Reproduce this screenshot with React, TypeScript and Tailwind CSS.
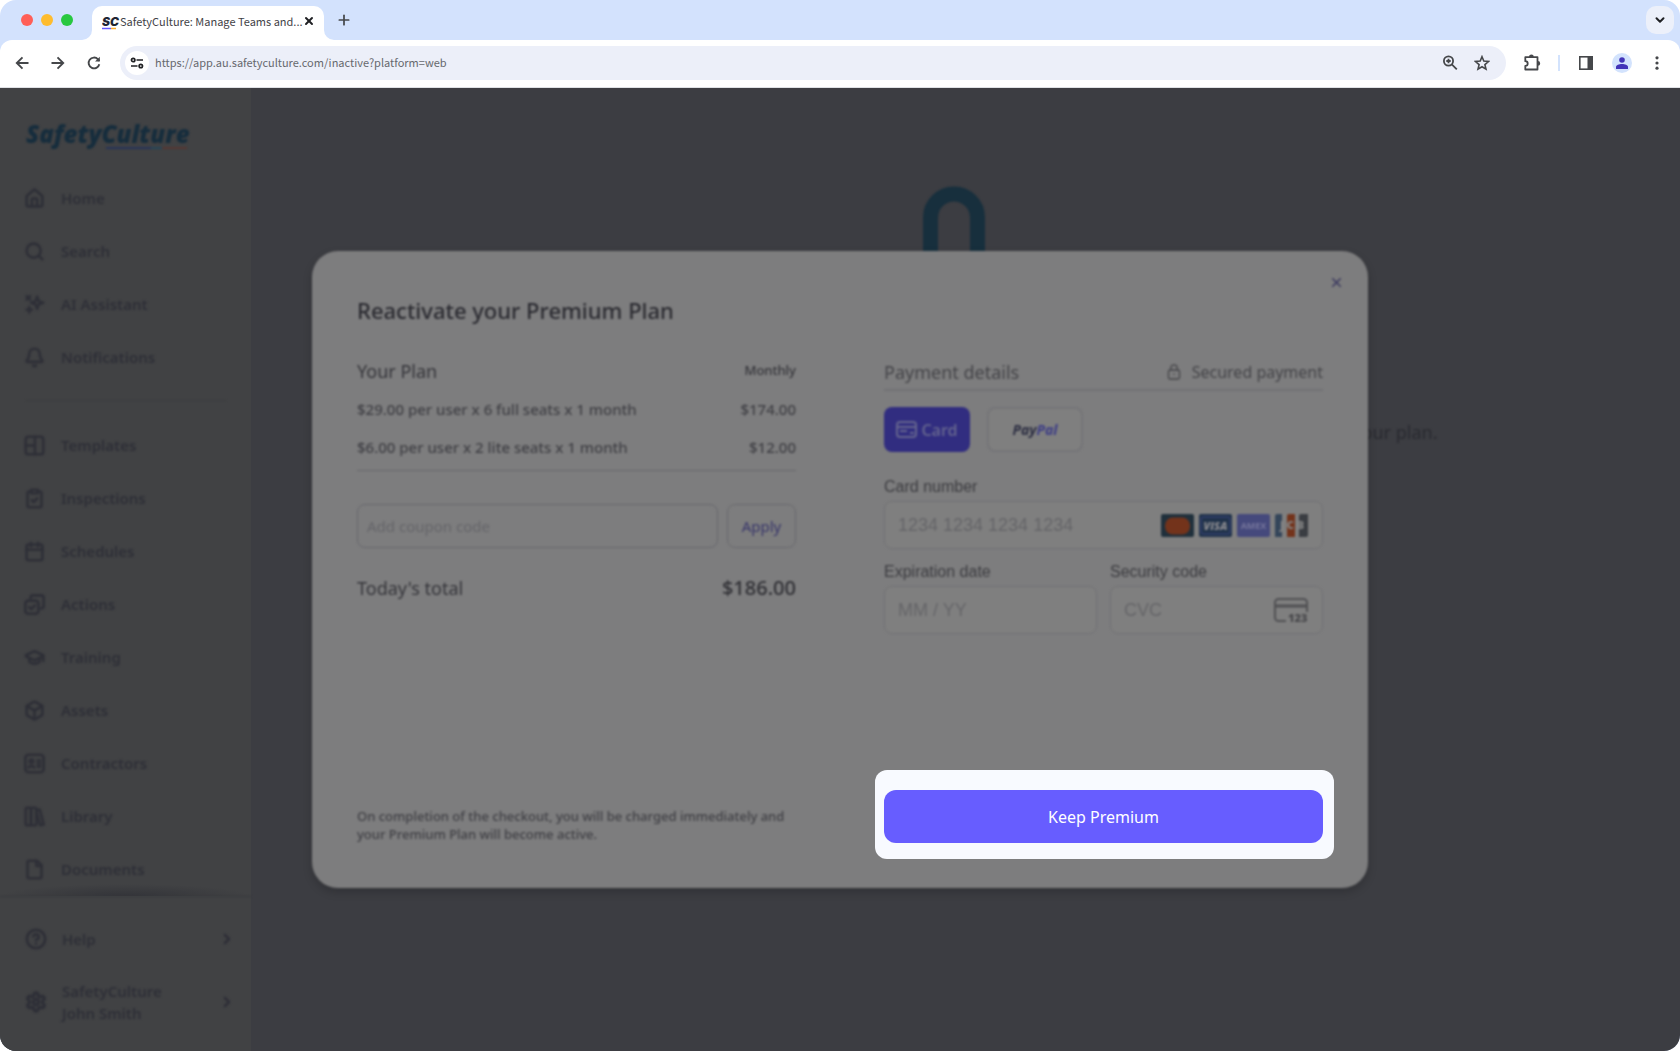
import React from 'react';
import {
  Bell,
  Box,
  Calendar,
  ChevronDown,
  ChevronRight,
  CircleHelp,
  ClipboardCheck,
  File,
  GraduationCap,
  House,
  Plus,
  Search,
  Settings,
  X,
} from 'lucide-react';

const svgProps = {
  viewBox: '0 0 24 24',
  fill: 'none',
  stroke: 'currentColor',
  strokeWidth: 3,
  strokeLinecap: 'round' as const,
  strokeLinejoin: 'round' as const,
};

function AssistantIcon({ className }: { className?: string }) {
  return (
    <svg {...svgProps} className={className}>
      <path d="M15 3l1.800 5.200L22 10l-5.200 1.800L15 17l-1.800-5.200L8 10l5.200-1.800z" />
      <path d="M3 2.500l4 4M3 6.500l4-4" />
      <path d="M6 15v6M3 18h6" />
    </svg>
  );
}

function TemplatesIcon({ className }: { className?: string }) {
  return (
    <svg {...svgProps} className={className}>
      <rect x="2" y="2" width="20" height="20" rx="3" />
      <path d="M12.500 2v20M2 12h10.500" />
    </svg>
  );
}

function ActionsIcon({ className }: { className?: string }) {
  return (
    <svg {...svgProps} className={className}>
      <rect x="1.500" y="7.500" width="15" height="15" rx="3.500" />
      <path d="M7.500 4.500a3 3 0 0 1 3-3h9a3 3 0 0 1 3 3v9a3 3 0 0 1-3 3" />
      <path d="M6 15l2.300 2.300L12.500 13" />
    </svg>
  );
}

function ContractorsIcon({ className }: { className?: string }) {
  return (
    <svg {...svgProps} className={className}>
      <rect x="1.500" y="2" width="21" height="20" rx="4" />
      <circle cx="8.500" cy="9.500" r="2" />
      <path d="M5.500 16.500c.4-2 5.600-2 6 0M15.500 8.500h3M15.500 12h3M15.500 15.500h3" />
    </svg>
  );
}

function LibraryIcon({ className }: { className?: string }) {
  return (
    <svg {...svgProps} className={className}>
      <rect x="2" y="2" width="6" height="20" rx="1.500" />
      <rect x="8" y="2" width="6" height="20" rx="1.500" />
      <path d="M14 5l4-1 4.500 17-4 1L14 6" />
    </svg>
  );
}

const topItems = [
  { label: 'Home', icon: House },
  { label: 'Search', icon: Search },
  { label: 'AI Assistant', icon: AssistantIcon },
  { label: 'Notifications', icon: Bell },
];

const mainItems = [
  { label: 'Templates', icon: TemplatesIcon },
  { label: 'Inspections', icon: ClipboardCheck },
  { label: 'Schedules', icon: Calendar },
  { label: 'Actions', icon: ActionsIcon },
  { label: 'Training', icon: GraduationCap },
  { label: 'Assets', icon: Box },
  { label: 'Contractors', icon: ContractorsIcon },
  { label: 'Library', icon: LibraryIcon },
  { label: 'Documents', icon: File },
];

const planRows = [
  { label: '$29.00 per user x 6 full seats x 1 month', price: '$174.00' },
  { label: '$6.00 per user x 2 lite seats x 1 month', price: '$12.00' },
];

function NavItem({ item }: { item: any }) {
  const Icon = item.icon;
  return (
    <li>
      <a href="#" className="flex h-[53px] items-center gap-4">
        <Icon className="size-[21px]" strokeWidth={3} />
        {item.label}
      </a>
    </li>
  );
}

function TabStrip() {
  return (
    <div className="flex h-10 items-end pr-1.5 pl-[21px]">
      <div className="flex gap-2 self-center">
        <span className="size-3 rounded-full bg-[#ff5f57]"></span>
        <span className="size-3 rounded-full bg-[#febc2e]"></span>
        <span className="size-3 rounded-full bg-[#28c840]"></span>
      </div>
      <svg className="ml-[9px] size-2.5" viewBox="0 0 10 10"><path d="M10 0v10H0A10 10 0 0 0 10 0z" fill="#fff" /></svg>
      <div className="flex h-[34px] w-[232px] items-center rounded-t-[10px] bg-white pr-2.5 pb-1 pl-2.5 font-['Noto_Sans_CJK_SC','Open_Sans',sans-serif]">
        <svg className="h-5 w-[18px] shrink-0" viewBox="0 0 18 20">
          <text x="0" y="15" fontFamily="Inter, sans-serif" fontSize="12" fontWeight="900" fontStyle="italic" fill="#1f2533">SC</text>
          <path d="M0 17.500h9" stroke="#6559ff" strokeWidth="1.400" />
          <path d="M9 17.500h5" stroke="#ffb02e" strokeWidth="1.400" />
        </svg>
        <span className="flex-1 text-[11px] leading-5 whitespace-nowrap text-[#3f4247]">SafetyCulture: Manage Teams and...</span>
        <button type="button" aria-label="Close tab"><X className="size-3 text-[#202124]" strokeWidth={4} /></button>
      </div>
      <svg className="size-2.5" viewBox="0 0 10 10"><path d="M0 0v10h10A10 10 0 0 1 0 0z" fill="#fff" /></svg>
      <button type="button" aria-label="New tab" className="ml-0.5 self-center"><Plus className="size-4 text-[#45474a]" strokeWidth={2.6} /></button>
      <button type="button" aria-label="Search tabs" className="ml-auto flex size-7 items-center justify-center self-center rounded-[10px] bg-[#ecf0fa]">
        <ChevronDown className="size-3.5 text-[#202124]" strokeWidth={3.4} />
      </button>
    </div>
  );
}

function Toolbar() {
  return (
    <div className="flex h-12 items-center rounded-t-xl border-b border-[#dfe1e5] bg-white pr-3.5 pb-0.5 pl-3 text-[#45474a]">
      <div className="flex gap-4">
        <button type="button" aria-label="Back">
          <svg className="size-5" viewBox="0 0 20 20" fill="none" stroke="currentColor" strokeWidth="1.900"><path d="M16.500 10H5M10.500 4.300L4.800 10l5.700 5.700" /></svg>
        </button>
        <button type="button" aria-label="Forward">
          <svg className="size-5" viewBox="0 0 20 20" fill="none" stroke="currentColor" strokeWidth="1.900"><path d="M3.500 10H15M9.500 4.300l5.700 5.700-5.700 5.700" /></svg>
        </button>
        <button type="button" aria-label="Reload">
          <svg className="size-5" viewBox="0 0 20 20" fill="none" stroke="currentColor" strokeWidth="1.900"><path d="M15.300 11.200A5.400 5.400 0 1 1 14 6.300l1.500 1.500" /><path d="M15.800 3.800v4.700h-4.700z" fill="currentColor" stroke="none" /></svg>
        </button>
      </div>
      <div className="ml-4 flex h-[34px] flex-1 items-center rounded-full bg-[#eceff9] pr-4 pl-[5px]">
        <button type="button" aria-label="Site information" className="flex size-6 items-center justify-center rounded-full bg-white">
          <svg className="size-4" viewBox="0 0 16 16" fill="none" stroke="#202124" strokeWidth="1.700">
            <circle cx="4.200" cy="5" r="1.700" />
            <path d="M7.500 5H14M2 11h6.500" />
            <circle cx="11.800" cy="11" r="1.700" />
          </svg>
        </button>
        <input
          type="text"
          aria-label="Address"
          defaultValue="https://app.au.safetyculture.com/inactive?platform=web"
          className="ml-1.5 min-w-0 flex-1 bg-transparent font-['Noto_Sans_CJK_SC','Open_Sans',sans-serif] text-[11px] text-[#66686d] outline-none"
        />
        <button type="button" aria-label="Zoom">
          <svg className="size-4" viewBox="0 0 16 16" fill="none" stroke="currentColor" strokeWidth="1.800"><circle cx="6.500" cy="6" r="4.600" /><path d="M9.800 9.300l5 5M4.300 6h4.400M6.500 3.800v4.400" /></svg>
        </button>
        <button type="button" aria-label="Bookmark" className="ml-4">
          <svg className="size-4" viewBox="0 0 16 16" fill="none" stroke="currentColor" strokeWidth="1.600"><path d="M8 1.700l1.800 4.400 4.700.4-3.600 3.100 1.100 4.600L8 11.800l-4 2.400 1.100-4.600L1.500 6.500l4.700-.4z" /></svg>
        </button>
      </div>
      <button type="button" aria-label="Extensions" className="ml-[17px]">
        <svg className="size-[18px]" viewBox="0 0 18 18" fill="none" stroke="currentColor" strokeWidth="1.800"><path d="M2.300 3.200H14.500V15.500H2.300V12a2.300 2.300 0 0 0 0-4.800z" strokeLinejoin="round" /><path d="M6 3a2.400 2.400 0 0 1 4.800 0zM14.800 7a2.400 2.400 0 0 1 0 4.800z" fill="currentColor" stroke="none" /></svg>
      </button>
      <span className="ml-[17px] h-4 w-0.5 bg-[#d3e3fd]"></span>
      <button type="button" aria-label="Side panel" className="ml-[18px]">
        <svg className="size-4" viewBox="0 0 16 16" fill="none" stroke="currentColor" strokeWidth="1.600"><rect x="1.800" y="1.800" width="12.400" height="12.400" /><path d="M9.500 2h4.500v12H9.500z" fill="currentColor" stroke="none" /></svg>
      </button>
      <button type="button" aria-label="Profile" className="ml-[18px] flex size-5 items-center justify-center rounded-full bg-[#d3e3fd]">
        <svg className="size-3.5" viewBox="0 0 14 14" fill="#4234b8"><circle cx="7" cy="4" r="2.800" /><path d="M1 13V11c0-4 12-4 12 0v2z" /></svg>
      </button>
      <button type="button" aria-label="Menu" className="ml-4">
        <svg className="size-[18px]" viewBox="0 0 18 18" fill="currentColor"><circle cx="9" cy="3.800" r="1.600" /><circle cx="9" cy="9" r="1.600" /><circle cx="9" cy="14.200" r="1.600" /></svg>
      </button>
    </div>
  );
}

function Sidebar() {
  return (
    <aside className="flex w-[251px] shrink-0 flex-col bg-[#414244] text-[15px] font-semibold text-[#2e2f37]">
      <nav className="flex-1 pt-7 blur-[1px]">
        <svg className="ml-[26px] h-9 w-[190px]" viewBox="0 0 190 36">
          <text x="0" y="27" fontFamily="Open Sans, sans-serif" fontSize="24" fontWeight="800" fontStyle="italic" fill="#162d3d">SafetyCulture</text>
          <path d="M80 32h45" stroke="#26345a" strokeWidth="2" />
          <path d="M125 32h11" stroke="#24465a" strokeWidth="2" />
          <path d="M136 32h25" stroke="#553732" strokeWidth="2" />
        </svg>
        <ul className="mt-5 pl-6">
          {topItems.map((item) => <NavItem key={item.label} item={item} />)}
        </ul>
        <hr className="mt-4 mr-[25px] ml-[26px] border-[#3b3c3f]" />
        <ul className="mt-[18px] pl-6">
          {mainItems.map((item) => <NavItem key={item.label} item={item} />)}
        </ul>
      </nav>
      <div className="-mt-3 h-3 bg-[radial-gradient(50%_100%_at_50%_100%,#333439,transparent)]"></div>
      <div className="border-t border-[#37383d] pt-[22px] pb-[26px] blur-[1px]">
        <a href="#" className="flex h-10 items-center gap-[15px] pl-[25px]">
          <CircleHelp className="size-[22px]" strokeWidth={3} />
          Help
          <ChevronRight className="mr-4 ml-auto size-4" strokeWidth={4} />
        </a>
        <a href="#" className="mt-5 flex h-[46px] items-center gap-[15px] pl-[25px]">
          <Settings className="size-[22px]" strokeWidth={3.6} />
          <span className="leading-[22px]">SafetyCulture<br />John Smith</span>
          <ChevronRight className="mr-4 ml-auto size-4" strokeWidth={4} />
        </a>
      </div>
    </aside>
  );
}

function CardBrands() {
  return (
    <svg className="h-[23px] w-[148px] shrink-0" viewBox="0 0 148 23">
      <rect width="33" height="23" rx="2" fill="#20303c" />
      <rect x="4" y="3.500" width="25" height="17" rx="8" fill="#73331b" />
      <rect x="38" width="33" height="23" rx="2" fill="#20324a" />
      <rect x="40" y="3" width="29" height="17" rx="2" fill="none" stroke="#3c4680" />
      <text x="54.500" y="16" fontFamily="Open Sans, sans-serif" fontSize="11" fontWeight="800" fontStyle="italic" textAnchor="middle" fill="#8b8b90">VISA</text>
      <rect x="76" width="33" height="23" rx="2" fill="#45497c" />
      <text x="92.500" y="15" fontFamily="Open Sans, sans-serif" fontSize="9" fontWeight="700" textAnchor="middle" fill="#76769c">AMEX</text>
      <path d="M116 0h5v23h-7V2a2 2 0 0 1 2-2z" fill="#34455a" />
      <path d="M128 0h6v23h-8V2a2 2 0 0 1 2-2z" fill="#73331b" />
      <path d="M140 0h7v21a2 2 0 0 1-2 2h-7V2a2 2 0 0 1 2-2z" fill="#3a3d42" />
      <text x="131" y="15" fontFamily="Open Sans, sans-serif" fontSize="11" fontWeight="800" textAnchor="middle" fill="#858585">J C B</text>
    </svg>
  );
}

function CvcIcon() {
  return (
    <svg className="h-[31px] w-[38px] shrink-0" viewBox="0 0 38 31" fill="none" stroke="#505053" strokeWidth="2">
      <path d="M12 26H4.500A3.500 3.500 0 0 1 1 22.500V7.500A3.500 3.500 0 0 1 4.500 4h25A3.500 3.500 0 0 1 33 7.500V17" />
      <path d="M1 11h32" strokeWidth="3" />
      <text x="14" y="27" fontFamily="Open Sans, sans-serif" fontSize="11" fontWeight="800" fill="#48484b" stroke="none">123</text>
    </svg>
  );
}

function CheckoutModal() {
  const fieldBox = 'flex h-12 items-center rounded-lg border border-[#727275] bg-[#7f7f7f] pl-[13px]';
  const fieldInput = 'min-w-0 flex-1 bg-transparent text-lg text-[#636366] outline-none placeholder:text-[#656568]';

  return (
    <div className="absolute inset-0 flex items-center justify-center">
      <section role="dialog" aria-label="Reactivate your Premium Plan" className="relative flex min-h-[637px] w-full max-w-[1056px] flex-col px-[45px] pt-11 pb-[29px]">
        <div className="absolute inset-0 rounded-[26px] bg-[#7d7d7e] shadow-[0_4px_10px_rgba(0,0,0,0.2)] blur-[1px]"></div>
        <button type="button" aria-label="Close" className="absolute top-6 right-6 blur-[1px]"><X className="size-[15px] text-[#3d3b60]" strokeWidth={2.6} /></button>

        <h1 className="relative text-[22px] leading-[30px] font-medium text-[#2b2b31] blur-[1px]">Reactivate your Premium Plan</h1>
        <div className="relative mt-[27px] grid flex-1 grid-cols-2 gap-x-[88px]">
          {/* Plan summary */}
          <div className="flex flex-col pb-4 text-[#404045] blur-[1px]">
            <div className="border-b border-[#68686c] pb-1">
              <table className="w-full text-[15px]">
                <thead>
                  <tr className="h-[38px]">
                    <th scope="col" className="p-0 text-left text-lg leading-6 font-normal text-[#35353a]">Your Plan</th>
                    <th scope="col" className="p-0 text-right text-[13px] font-medium text-[#35353a]">Monthly</th>
                  </tr>
                </thead>
                <tbody className="font-medium">
                  {planRows.map((row) => (
                    <tr key={row.label} className="h-[38px]">
                      <td className="p-0">{row.label}</td>
                      <td className="p-0 text-right">{row.price}</td>
                    </tr>
                  ))}
                </tbody>
              </table>
            </div>
            <form className="mt-[33px] flex gap-[9px]" onSubmit={(e) => e.preventDefault()}>
              <input type="text" aria-label="Add coupon code" placeholder="Add coupon code" className="h-11 min-w-0 flex-1 rounded-lg border border-[#68686d] px-[9px] text-[15px] outline-none placeholder:text-[#656569]" />
              <button type="submit" className="h-11 w-[69px] rounded-lg border border-[#6a6a6e] text-[15px] text-[#38366a]">Apply</button>
            </form>
            <div className="mt-[26px] flex items-center justify-between leading-7">
              <span className="text-lg text-[#35353a]">Today's total</span>
              <span className="text-xl font-medium text-[#2f2f34]">$186.00</span>
            </div>
            <p className="mt-auto text-[13px] leading-[18px] font-medium">
              On completion of the checkout, you will be charged immediately and your Premium Plan will become active.
            </p>
          </div>

          {/* Payment details */}
          <div className="flex flex-col">
            <div className="blur-[1px]">
              <div className="flex h-[39px] items-center border-b-2 border-[#727275] pt-0.5 text-[#444448]">
                <h2 className="text-lg">Payment details</h2>
                <svg className="mr-2.5 ml-auto size-4" viewBox="0 0 16 16" fill="none" stroke="currentColor" strokeWidth="1.300"><rect x="2.500" y="6" width="11" height="9" rx="1.500" /><path d="M4.800 6V4a3.200 3.200 0 0 1 6.400 0v2M8 9.500v1.500" /></svg>
                <span className="text-base">Secured payment</span>
              </div>
              <div className="mt-4 flex gap-[17px]">
                <button type="button" className="flex h-[45px] w-[86px] items-center justify-center gap-1 rounded-lg bg-[#312d80] text-base font-semibold text-[#64648e]">
                  <svg className="h-[17px] w-[21px]" viewBox="0 0 21 17" fill="none" stroke="currentColor" strokeWidth="2"><rect x="1" y="1" width="19" height="15" rx="3" /><path d="M1 6h19M4 10h7M14 12h4" /></svg>
                  Card
                </button>
                <button type="button" className="h-[45px] w-24 rounded-lg border-2 border-[#757578] bg-[#7f7f7f] text-sm font-bold text-[#2c2e42] italic">
                  Pay<span className="text-[#3d3d85]">Pal</span>
                </button>
              </div>
              <div className="mt-[25px] font-['Liberation_Sans',Arial,sans-serif] text-base text-[#3c3c40]">
                <label htmlFor="card-number" className="block leading-5">Card number</label>
                <div className={`mt-1 pr-[13px] ${fieldBox}`}>
                  <input id="card-number" type="text" placeholder="1234 1234 1234 1234" className={fieldInput} />
                  <CardBrands />
                </div>
                <div className="mt-[13px] grid grid-cols-2 gap-[13px]">
                  <div>
                    <label htmlFor="expiry" className="block leading-5">Expiration date</label>
                    <div className={`mt-1 pr-[13px] ${fieldBox}`}>
                      <input id="expiry" type="text" placeholder="MM / YY" className={fieldInput} />
                    </div>
                  </div>
                  <div>
                    <label htmlFor="cvc" className="block leading-5">Security code</label>
                    <div className={`mt-1 pr-2.5 ${fieldBox}`}>
                      <input id="cvc" type="text" placeholder="CVC" className={fieldInput} />
                      <CvcIcon />
                    </div>
                  </div>
                </div>
              </div>
            </div>
            <div className="-mr-[11px] -ml-[9px] mt-auto rounded-xl bg-[#f8faff] pt-5 pr-[11px] pb-4 pl-[9px]">
              <button type="button" className="h-[53px] w-full rounded-xl bg-[#675dff] text-base text-white">Keep Premium</button>
            </div>
          </div>
        </div>
      </section>
    </div>
  );
}

export default function App() {
  return (
    <div className="flex min-h-screen flex-col overflow-hidden rounded-2xl bg-[#d3e2fd] font-['Noto_Sans',sans-serif]">
      <TabStrip />
      <Toolbar />
      <div className="relative flex flex-1 bg-[#3c3d42]">
        <Sidebar />
        <main className="flex flex-1 flex-col items-center pt-[97px] pr-6 blur-[1px]">
          <svg className="h-[120px] w-16" viewBox="0 0 64 120" fill="none" stroke="#172f3d" strokeWidth="15">
            <path d="M8.500 120V32.500a23.500 23.500 0 0 1 47 0V120" />
          </svg>
          <p className="mt-[113px] w-full max-w-[968px] text-right text-lg text-[#292a30]">your plan.</p>
        </main>
        <CheckoutModal />
      </div>
    </div>
  );
}
